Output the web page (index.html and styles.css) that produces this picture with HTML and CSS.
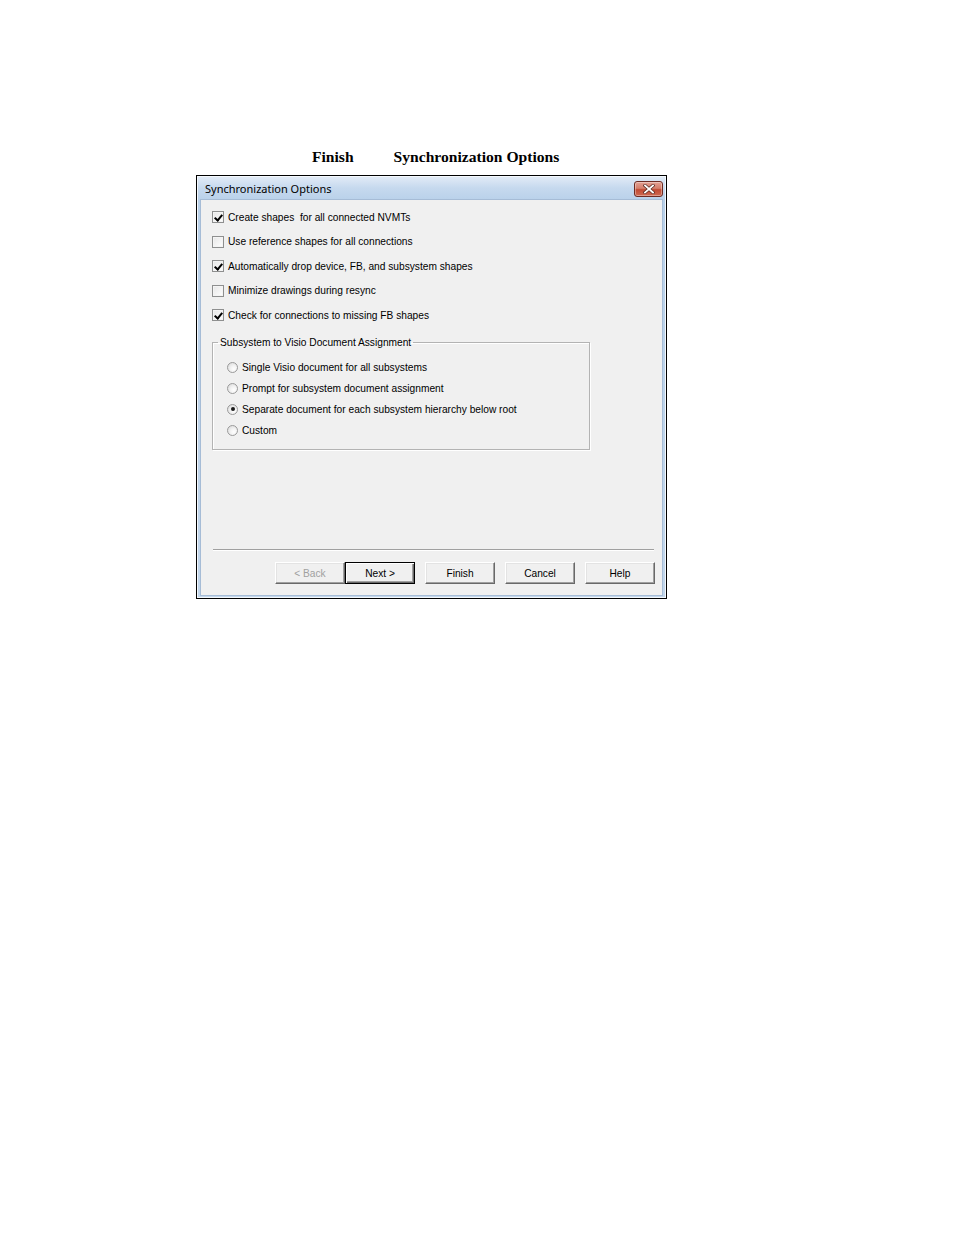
FILE: index.html
```html
<!DOCTYPE html>
<html>
<head>
<meta charset="utf-8">
<title>Synchronization Options</title>
<link rel="stylesheet" href="styles.css">
</head>
<body>
<div class="page">
  <div class="caption"><span>Finish</span><span>Synchronization Options</span></div>
  <div class="dialog">
    <div class="titlebar">
      <span class="title">Synchronization Options</span>
      <span class="close">
        <svg width="12" height="10" viewBox="0 0 12 10">
          <path d="M2 1.5 L10 8.5 M10 1.5 L2 8.5" stroke="#5a2a22" stroke-width="3.2" stroke-linecap="square"/>
          <path d="M2 1.5 L10 8.5 M10 1.5 L2 8.5" stroke="#ffffff" stroke-width="1.8" stroke-linecap="square"/>
        </svg>
      </span>
    </div>
    <div class="content">
      <div class="checks">
        <label class="row"><span class="cb on"></span><span>Create shapes&nbsp; for all connected NVMTs</span></label>
        <label class="row"><span class="cb"></span><span>Use reference shapes for all connections</span></label>
        <label class="row"><span class="cb on"></span><span>Automatically drop device, FB, and subsystem shapes</span></label>
        <label class="row"><span class="cb"></span><span>Minimize drawings during resync</span></label>
        <label class="row"><span class="cb on"></span><span>Check for connections to missing FB shapes</span></label>
      </div>
      <fieldset class="group">
        <legend>Subsystem to Visio Document Assignment</legend>
        <label class="rrow"><span class="rb"></span><span>Single Visio document for all subsystems</span></label>
        <label class="rrow"><span class="rb"></span><span>Prompt for subsystem document assignment</span></label>
        <label class="rrow"><span class="rb on"></span><span>Separate document for each subsystem hierarchy below root</span></label>
        <label class="rrow"><span class="rb"></span><span>Custom</span></label>
      </fieldset>
      <div class="spacer"></div>
      <div class="sep"></div>
      <div class="buttons">
        <span class="btn disabled">&lt; Back</span>
        <span class="btn default">Next &gt;</span>
        <span class="btn gap">Finish</span>
        <span class="btn gap">Cancel</span>
        <span class="btn gap">Help</span>
      </div>
    </div>
  </div>
</div>
</body>
</html>
```
FILE: styles.css
```css
html, body {
  margin: 0;
  padding: 0;
  background: #ffffff;
}
.page {
  padding-top: 148px;
  width: 954px;
  height: 1235px;
  box-sizing: border-box;
}
.caption {
  display: flex;
  gap: 40px;
  margin-left: 312px;
  font-family: "Liberation Serif", serif;
  font-weight: bold;
  font-size: 15.6px;
  line-height: 18px;
  color: #000;
}
.dialog {
  margin-top: 9px;
  margin-left: 196px;
  width: 471px;
  height: 424px;
  box-sizing: border-box;
  border: 1px solid #000;
  box-shadow: inset 0 0 0 1px #f4f8fc;
  background: linear-gradient(#e3ecf7 0px, #c6d9ee 12px, #b9d1ea 24px, #c3d7ec 100%);
  padding: 0 3px 2px 3px;
  display: flex;
  flex-direction: column;
}
.titlebar {
  height: 23px;
  flex: none;
  display: flex;
  align-items: center;
  justify-content: space-between;
  padding-left: 5px;
  padding-right: 0;
}
.title {
  font-family: "Noto Sans", sans-serif;
  font-size: 11px;
  color: #000;
  margin-top: 1px;
}
.close {
  width: 29px;
  height: 16px;
  margin-top: 3px;
  box-sizing: border-box;
  border: 1px solid #6d2b23;
  border-radius: 3px;
  background: linear-gradient(#e3a194 0%, #d47f6c 45%, #c14a33 55%, #cf6a52 100%);
  box-shadow: inset 0 0 0 1px rgba(255,255,255,0.35);
  display: flex;
  align-items: center;
  justify-content: center;
}
.content {
  flex: 1;
  background: #f0f0f0;
  border: 1px solid #a6bcd6;
  display: flex;
  flex-direction: column;
  padding: 5px 7px 11px 11px;
  font-family: "Liberation Sans", Arial, sans-serif;
  font-size: 10.2px;
  color: #000;
}
.checks {
  display: flex;
  flex-direction: column;
}
.row {
  height: 24.5px;
  display: flex;
  align-items: center;
  gap: 4px;
}
.cb {
  width: 12px;
  height: 12px;
  flex: none;
  box-sizing: border-box;
  border: 1px solid #8e8f8f;
  background: linear-gradient(135deg, #e6e6e6, #ffffff);
  box-shadow: inset 0 0 0 1px #f4f4f4;
  position: relative;
}
.cb.on::after {
  content: "";
  position: absolute;
  left: 2.5px;
  top: 0.5px;
  width: 3px;
  height: 6px;
  border-right: 2px solid #000;
  border-bottom: 2px solid #000;
  transform: rotate(40deg);
}
.group {
  margin: 9px 0 0 0;
  width: 378px;
  box-sizing: border-box;
  padding: 8px 10px 8px 14px;
  border: 1px solid #b3b3b3;
  box-shadow: 1px 1px 0 #ffffff, inset 1px 1px 0 #ffffff;
  min-width: 0;
}
.group legend {
  padding: 0 2px;
  margin-left: -9px;
  line-height: 12px;
}
.rrow {
  height: 21px;
  display: flex;
  align-items: center;
  gap: 4px;
}
.rb {
  width: 11px;
  height: 11px;
  flex: none;
  box-sizing: border-box;
  border: 1px solid #9a9a9a;
  border-radius: 50%;
  background: radial-gradient(circle at 65% 65%, #ffffff 0%, #f2f2f2 40%, #d5d5d5 100%);
  position: relative;
}
.rb.on::after {
  content: "";
  position: absolute;
  left: 2.5px;
  top: 2.5px;
  width: 4px;
  height: 4px;
  border-radius: 50%;
  background: #1a1a1a;
}
.spacer {
  flex: 1;
}
.sep {
  height: 1px;
  background: #a0a0a0;
  border-bottom: 1px solid #ffffff;
  margin: 0 1px 11px 1px;
}
.buttons {
  display: flex;
  justify-content: flex-end;
}
.btn {
  width: 70px;
  height: 22px;
  box-sizing: border-box;
  display: flex;
  align-items: center;
  justify-content: center;
  background: #f0f0f0;
  border-top: 1px solid #ffffff;
  border-left: 1px solid #ffffff;
  border-right: 1px solid #696969;
  border-bottom: 1px solid #696969;
  box-shadow: inset -1px -1px 0 #a0a0a0, inset 1px 1px 0 #e3e3e3;
}
.btn.gap {
  margin-left: 10px;
}
.btn.disabled {
  color: #a0a0a0;
}
.btn.default {
  border: 1px solid #000;
  box-shadow: inset 1px 1px 0 #ffffff, inset -1px -1px 0 #696969, inset -2px -2px 0 #a0a0a0;
}
```
